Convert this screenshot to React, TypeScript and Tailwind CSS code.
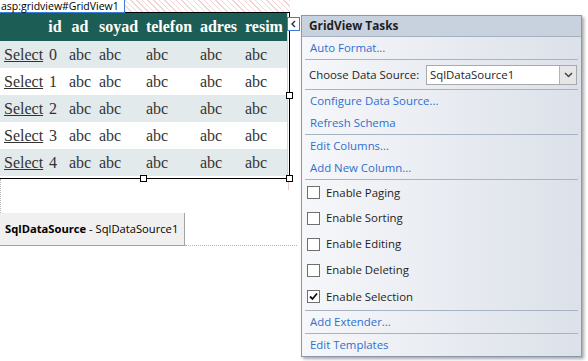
const gridFont = { fontFamily: '"Liberation Serif", "Times New Roman", serif' };

const columns = [
  { name: "", width: "w-[45px]" },
  { name: "id", width: "w-[20px]" },
  { name: "ad", width: "w-[30px]" },
  { name: "soyad", width: "w-[47px]" },
  { name: "telefon", width: "w-[54px]" },
  { name: "adres", width: "w-[45px]" },
  { name: "resim", width: "w-[46px]" },
];

const rows = [0, 1, 2, 3, 4];

function Handle({ className }: { className: string }) {
  return <div className={`absolute w-[7px] h-[7px] bg-white border border-black ${className}`} />;
}

function Separator() {
  return <div className="h-px mx-[3px] bg-[#a7b2c2]" />;
}

function TaskLink({ label, h = "h-[22px]" }: { label: string; h?: string }) {
  return (
    <div className={`${h} flex items-center pl-[8px] text-[#2f6fd0]`}>
      {label}
    </div>
  );
}

function CheckRow({ label, checked, h }: { label: string; checked?: boolean; h: string }) {
  return (
    <div className={`${h} flex items-center pl-[5px] text-[#1e1e1e]`}>
      <div className="w-[13px] h-[13px] border border-[#6f6f6f] bg-white flex items-center justify-center">
        {checked && (
          <svg width="9" height="9" viewBox="0 0 9 9">
            <path d="M1 4.5 L3.5 7 L8 1.5" fill="none" stroke="#111" strokeWidth="1.8" />
          </svg>
        )}
      </div>
      <span className="ml-[6px]">{label}</span>
    </div>
  );
}

export default function App() {
  const uiFont = { fontFamily: '"Open Sans", "Noto Sans", sans-serif' };

  return (
    <div className="relative w-[588px] h-[361px] bg-white overflow-hidden">
      {/* designer surface */}
      <div className="w-[290px]">
        <div className="flex h-[13px]">
          <div
            className="w-[125px] border-r border-b border-[#3b7bd8] text-[10.5px] leading-[12px] pl-[1px] text-black whitespace-nowrap"
            style={uiFont}
          >
            asp:gridview#GridView1
          </div>
          <div className="flex-1 border-b border-black bg-[repeating-linear-gradient(45deg,#f2d4d4_0px,#f2d4d4_1px,#ffffff_1px,#ffffff_4px)]" />
        </div>

        <div className="relative border-r border-b border-black pb-[2px]">
          <div className="w-[288px] border-r border-[#ebc9c9]">
            <table className="table-fixed w-[287px] border-collapse text-[16px] text-[#333333]" style={gridFont}>
              <colgroup>
                {columns.map((c, i) => (
                  <col key={i} className={c.width} />
                ))}
              </colgroup>
              <thead>
                <tr className="h-[28px] bg-[#1c5e55] text-white font-bold">
                  {columns.map((c, i) => (
                    <th key={i} className="p-0 text-center whitespace-nowrap">
                      {c.name}
                    </th>
                  ))}
                </tr>
              </thead>
              <tbody>
                {rows.map((r) => (
                  <tr key={r} className={`h-[27px] ${r % 2 === 0 ? "bg-[#e3eaeb]" : "bg-white"}`}>
                    <td className="px-[4px] py-0 whitespace-nowrap">
                      <span className="underline">Select</span>
                    </td>
                    <td className="px-[4px] py-0">{r}</td>
                    <td className="px-[4px] py-0">abc</td>
                    <td className="px-[4px] py-0">abc</td>
                    <td className="px-[4px] py-0">abc</td>
                    <td className="px-[4px] py-0">abc</td>
                    <td className="px-[4px] py-0">abc</td>
                  </tr>
                ))}
              </tbody>
            </table>
          </div>
          <Handle className="right-[-4px] top-[79px]" />
          <Handle className="left-[140px] bottom-[-4px]" />
          <Handle className="right-[-4px] bottom-[-4px]" />
        </div>

        <div className="h-[34px] border-l border-dotted border-[#b5b5b5]">
          <div className="h-[11px] w-[288px] border-r border-[#ebc9c9]" />
        </div>
      </div>

      <div className="flex items-end">
        <div
          className="w-[185px] h-[33px] bg-[#f0f0f0] border-r border-b border-[#a3a3a3] flex items-center pl-[5px] text-[11.2px] text-black whitespace-nowrap"
          style={uiFont}
        >
          <span className="font-bold">SqlDataSource</span>
          <span>&nbsp;- SqlDataSource1</span>
        </div>
        <div className="w-[112px] border-b border-dotted border-[#b5b5b5]" />
      </div>

      {/* smart tag */}
      <div className="absolute left-[287px] top-[17px] w-[13px] h-[14px] bg-white border border-[#3b7bd8] flex items-center justify-center">
        <svg width="7" height="8" viewBox="0 0 7 8">
          <path d="M5 1 L2 4 L5 7" fill="none" stroke="#1a2a4a" strokeWidth="1.4" />
        </svg>
      </div>

      {/* GridView Tasks panel */}
      <div
        className="absolute left-[301px] top-[15px] w-[281px] h-[342px] border border-[#8b97ab] shadow-[2px_2px_3px_rgba(0,0,0,0.35)] text-[11.4px] flex flex-col"
        style={uiFont}
      >
        <div className="h-[21px] bg-[#c8d1de] border-b border-[#a5b0c1] flex items-center pl-[7px] font-bold text-[#1e1e1e] text-[11.8px]">
          GridView Tasks
        </div>
        <div className="flex-1 bg-linear-to-r from-[#f6f7fa] to-[#dce1e9]">
          <TaskLink label="Auto Format..." />
          <Separator />
          <div className="h-[29px] flex items-center pl-[7px] pr-[4px] text-[#1e1e1e]">
            <span>Choose Data Source:</span>
            <div className="ml-auto w-[151px] h-[20px] bg-white border border-[#a9a9a9] flex items-center">
              <span className="pl-[3px] flex-1">SqlDataSource1</span>
              <div className="w-[17px] h-[18px] bg-[#e6e6e6] border-l border-[#b3b3b3] flex items-center justify-center">
                <svg width="9" height="6" viewBox="0 0 9 6">
                  <path d="M1 1 L4.5 4.5 L8 1" fill="none" stroke="#444" strokeWidth="1.5" />
                </svg>
              </div>
            </div>
          </div>
          <Separator />
          <TaskLink label="Configure Data Source..." />
          <TaskLink label="Refresh Schema" />
          <Separator />
          <TaskLink label="Edit Columns..." />
          <TaskLink label="Add New Column..." />
          <Separator />
          <CheckRow label="Enable Paging" h="h-[25px]" />
          <CheckRow label="Enable Sorting" h="h-[26px]" />
          <CheckRow label="Enable Editing" h="h-[26px]" />
          <CheckRow label="Enable Deleting" h="h-[26px]" />
          <CheckRow label="Enable Selection" checked h="h-[27px]" />
          <Separator />
          <TaskLink label="Add Extender..." />
          <Separator />
          <TaskLink label="Edit Templates" />
        </div>
      </div>
    </div>
  );
}
